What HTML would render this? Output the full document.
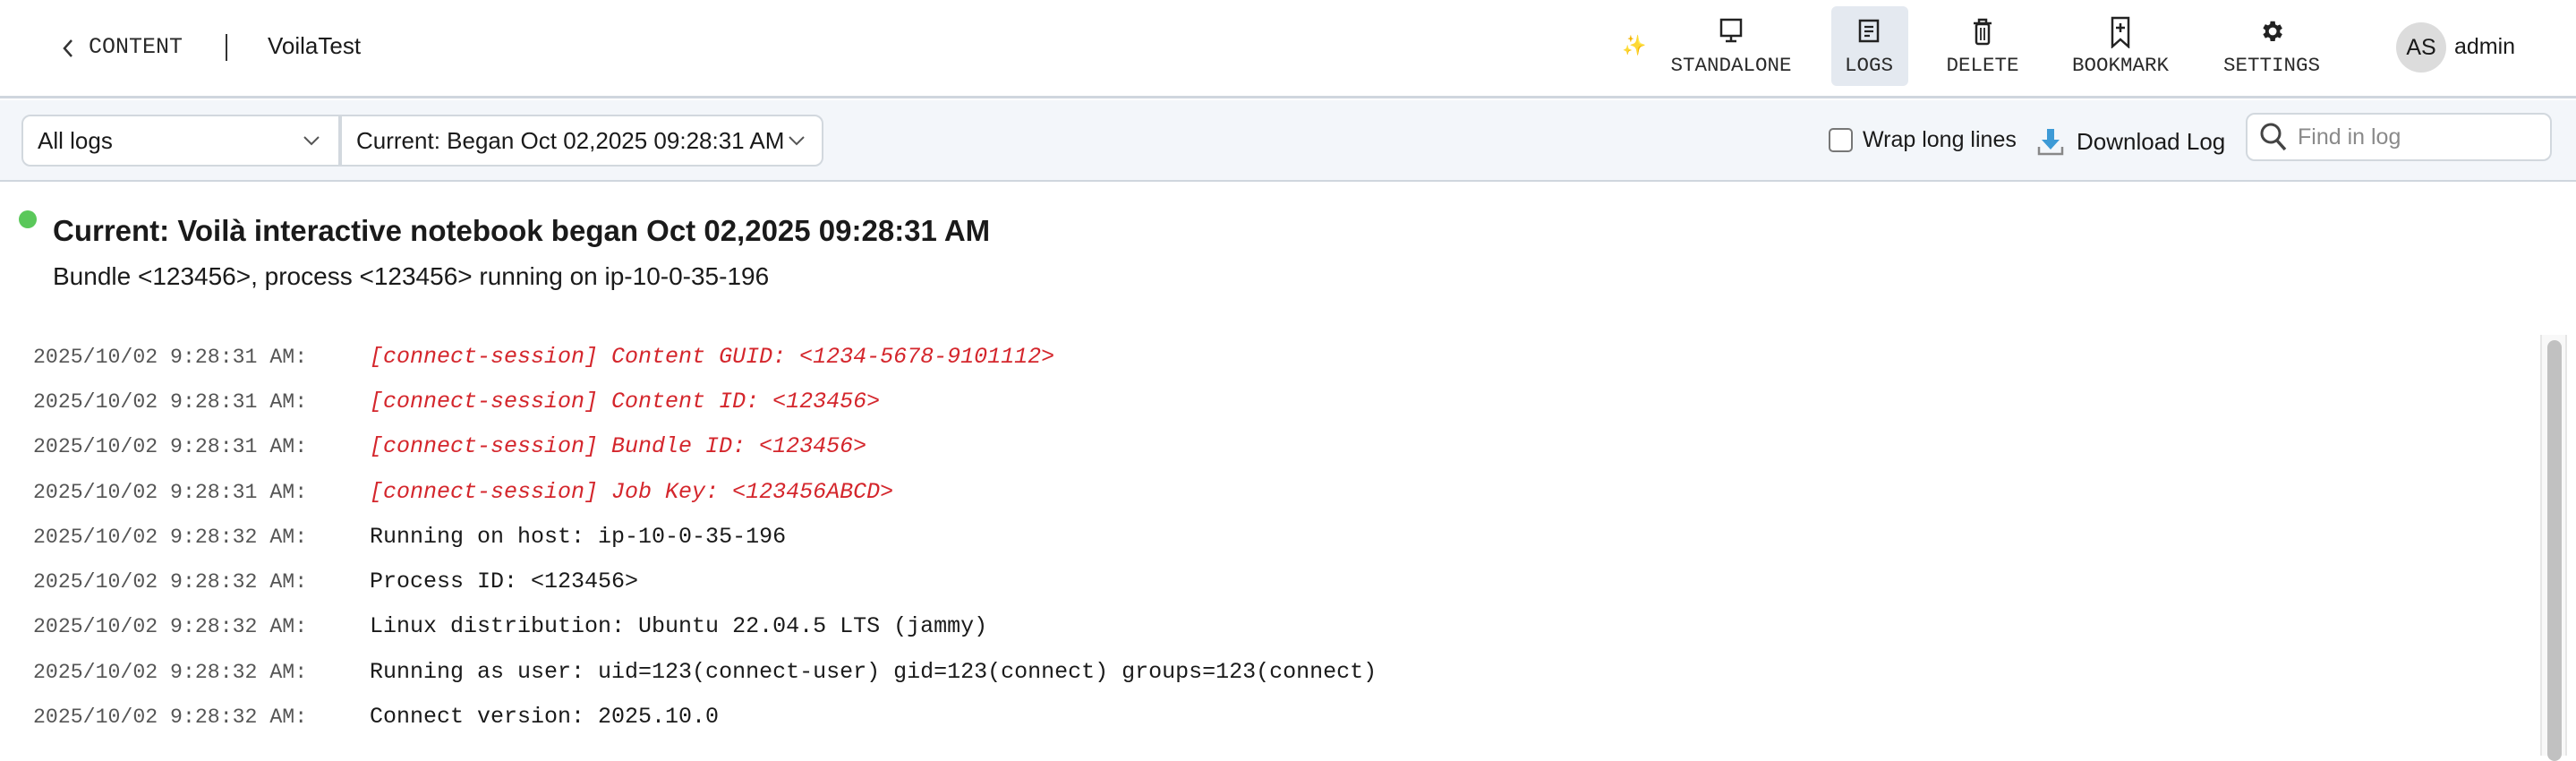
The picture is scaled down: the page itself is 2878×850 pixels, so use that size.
<!DOCTYPE html>
<html><head><meta charset="utf-8"><style>
*{box-sizing:border-box;margin:0;padding:0}
body{width:2878px;height:836px;overflow:hidden;background:#fff;font-family:"Liberation Sans",sans-serif;position:relative;color:#1a1a1a}
.a{position:absolute;white-space:nowrap}
.mono{font-family:"Liberation Mono",monospace}
.hdr{position:absolute;left:0;top:0;width:2878px;height:110px;background:#fff;border-bottom:3px solid #cfd6de}
.tb{position:absolute;left:0;top:112px;width:2878px;height:91px;background:#f3f6fa;border-bottom:2px solid #cfd6de}
.dd{position:absolute;top:128px;height:58px;background:#fff;border:2px solid #d2d8de;font-size:26px;line-height:54px;padding-left:16px}
.nl{position:absolute;top:60px;font-size:22.5px;transform:translateX(-50%);color:#2a2a2a}
.ic{position:absolute;top:20px;transform:translateX(-50%)}
.log{position:absolute;font-size:25px;line-height:30px}
.log.ts{color:#555;font-size:23.2px}
.r{color:#d4262c;font-style:italic}
</style></head><body>
<div class="hdr"></div>
<svg class="a" style="left:68px;top:43px" width="16" height="22" viewBox="0 0 16 22"><path d="M12 2 L4 11 L12 20" fill="none" stroke="#333" stroke-width="2.5"/></svg>
<div class="a mono" style="left:99px;top:38px;font-size:25px;color:#2a2a2a">CONTENT</div>
<div class="a" style="left:252px;top:38px;width:2px;height:30px;background:#333"></div>
<div class="a" style="left:299px;top:36px;font-size:26px">VoilaTest</div>

<div class="a" style="left:1812px;top:38px;font-size:22px;color:#f4c430">✨</div>
<div class="a" style="left:2046px;top:7px;width:86px;height:89px;background:#e4e9f0;border-radius:6px"></div>
<svg class="ic" style="left:1934px" width="28" height="30" viewBox="0 0 28 30"><rect x="3" y="2" width="22" height="18" fill="none" stroke="#222" stroke-width="2.5"/><path d="M14 20v5M8 26h12" stroke="#222" stroke-width="2.5"/></svg>
<svg class="ic" style="left:2088px" width="26" height="30" viewBox="0 0 26 30"><rect x="3" y="3" width="20" height="23" fill="none" stroke="#222" stroke-width="2.5"/><path d="M8 10h10M8 15h10M8 20h6" stroke="#222" stroke-width="2.2"/></svg>
<svg class="ic" style="left:2215px" width="24" height="32" viewBox="0 0 24 32"><path d="M2 6h20M8 6V2h8v4" fill="none" stroke="#222" stroke-width="2.5"/><rect x="5" y="7" width="14" height="22" rx="2" fill="none" stroke="#222" stroke-width="2.5"/><path d="M10 11v14M14 11v14" stroke="#222" stroke-width="1.8"/></svg>
<svg class="ic" style="left:2369px;top:18px" width="24" height="36" viewBox="0 0 24 36"><path d="M3 2h18v32l-9-8-9 8z" fill="none" stroke="#222" stroke-width="2.5"/><path d="M12 8v10M7 13h10" stroke="#222" stroke-width="2.5"/></svg>
<svg class="ic" style="left:2538px" width="30" height="30" viewBox="0 0 24 24"><path fill="#222" d="M19.4 13a7.5 7.5 0 0 0 0-2l2.1-1.6-2-3.5-2.5 1a7 7 0 0 0-1.7-1L14.9 3h-4l-.4 2.7a7 7 0 0 0-1.7 1l-2.5-1-2 3.5L6.4 11a7.5 7.5 0 0 0 0 2l-2.1 1.6 2 3.5 2.5-1a7 7 0 0 0 1.7 1l.4 2.7h4l.4-2.7a7 7 0 0 0 1.7-1l2.5 1 2-3.5zM12.9 15.5a3.5 3.5 0 1 1 0-7 3.5 3.5 0 0 1 0 7z"/></svg>
<div class="nl mono" style="left:1934px">STANDALONE</div>
<div class="nl mono" style="left:2088px">LOGS</div>
<div class="nl mono" style="left:2215px">DELETE</div>
<div class="nl mono" style="left:2369px">BOOKMARK</div>
<div class="nl mono" style="left:2538px">SETTINGS</div>
<div class="a" style="left:2677px;top:25px;width:56px;height:56px;border-radius:50%;background:#dcdcdc;font-size:25px;line-height:56px;text-align:center">AS</div>
<div class="a" style="left:2742px;top:38px;font-size:25px">admin</div>

<div class="tb"></div>
<div class="dd" style="left:24px;width:356px;border-radius:10px 0 0 10px">All logs</div>
<div class="dd" style="left:380px;width:540px;border-radius:0 10px 10px 0">Current: Began Oct 02,2025 09:28:31 AM</div>
<svg class="a" style="left:338px;top:150px" width="20" height="14" viewBox="0 0 20 14"><path d="M2 3l8 8 8-8" fill="none" stroke="#555" stroke-width="2"/></svg>
<svg class="a" style="left:880px;top:150px" width="20" height="14" viewBox="0 0 20 14"><path d="M2 3l8 8 8-8" fill="none" stroke="#555" stroke-width="2"/></svg>
<div class="a" style="left:2043px;top:143px;width:27px;height:27px;border:2px solid #777;border-radius:5px;background:#fff"></div>
<div class="a" style="left:2081px;top:142px;font-size:25px">Wrap long lines</div>
<svg class="a" style="left:2276px;top:142px" width="30" height="32" viewBox="0 0 30 32"><path d="M11 2h8v12h6L15 25 5 14h6z" fill="#3d9ad6"/><path d="M2 22v8h26v-8" fill="none" stroke="#888" stroke-width="2.5"/></svg>
<div class="a" style="left:2320px;top:143px;font-size:26px">Download Log</div>
<div class="a" style="left:2509px;top:126px;width:342px;height:54px;background:#fff;border:2px solid #d2d8de;border-radius:10px"></div>
<svg class="a" style="left:2524px;top:136px" width="32" height="34" viewBox="0 0 32 34"><circle cx="13" cy="13" r="10" fill="none" stroke="#444" stroke-width="3"/><path d="M20 21l9 10" stroke="#444" stroke-width="3.5"/></svg>
<div class="a" style="left:2567px;top:139px;font-size:25px;color:#8a8a8a">Find in log</div>

<div class="a" style="left:21px;top:235px;width:20px;height:20px;border-radius:50%;background:#5ac85a"></div>
<div class="a" style="left:59px;top:239px;font-size:33px;font-weight:bold">Current: Voilà interactive notebook began Oct 02,2025 09:28:31 AM</div>
<div class="a" style="left:59px;top:293px;font-size:28px">Bundle &lt;123456&gt;, process &lt;123456&gt; running on ip-10-0-35-196</div>

<div class="a" style="left:2838px;top:374px;width:30px;height:470px;background:#f8f8f8;border-left:2px solid #e6e6e6;border-right:2px solid #e6e6e6"></div>
<div class="a" style="left:2846px;top:380px;width:16px;height:470px;background:#c1c1c1;border-radius:8px"></div>

<div class="log mono ts" style="left:37px;top:384px">2025/10/02 9:28:31 AM:</div><div class="log mono r" style="left:413px;top:384px">[connect-session] Content GUID: &lt;1234-5678-9101112&gt;</div>
<div class="log mono ts" style="left:37px;top:434px">2025/10/02 9:28:31 AM:</div><div class="log mono r" style="left:413px;top:434px">[connect-session] Content ID: &lt;123456&gt;</div>
<div class="log mono ts" style="left:37px;top:484px">2025/10/02 9:28:31 AM:</div><div class="log mono r" style="left:413px;top:484px">[connect-session] Bundle ID: &lt;123456&gt;</div>
<div class="log mono ts" style="left:37px;top:535px">2025/10/02 9:28:31 AM:</div><div class="log mono r" style="left:413px;top:535px">[connect-session] Job Key: &lt;123456ABCD&gt;</div>
<div class="log mono ts" style="left:37px;top:585px">2025/10/02 9:28:32 AM:</div><div class="log mono" style="left:413px;top:585px">Running on host: ip-10-0-35-196</div>
<div class="log mono ts" style="left:37px;top:635px">2025/10/02 9:28:32 AM:</div><div class="log mono" style="left:413px;top:635px">Process ID: &lt;123456&gt;</div>
<div class="log mono ts" style="left:37px;top:685px">2025/10/02 9:28:32 AM:</div><div class="log mono" style="left:413px;top:685px">Linux distribution: Ubuntu 22.04.5 LTS (jammy)</div>
<div class="log mono ts" style="left:37px;top:736px">2025/10/02 9:28:32 AM:</div><div class="log mono" style="left:413px;top:736px">Running as user: uid=123(connect-user) gid=123(connect) groups=123(connect)</div>
<div class="log mono ts" style="left:37px;top:786px">2025/10/02 9:28:32 AM:</div><div class="log mono" style="left:413px;top:786px">Connect version: 2025.10.0</div>
</body></html>
